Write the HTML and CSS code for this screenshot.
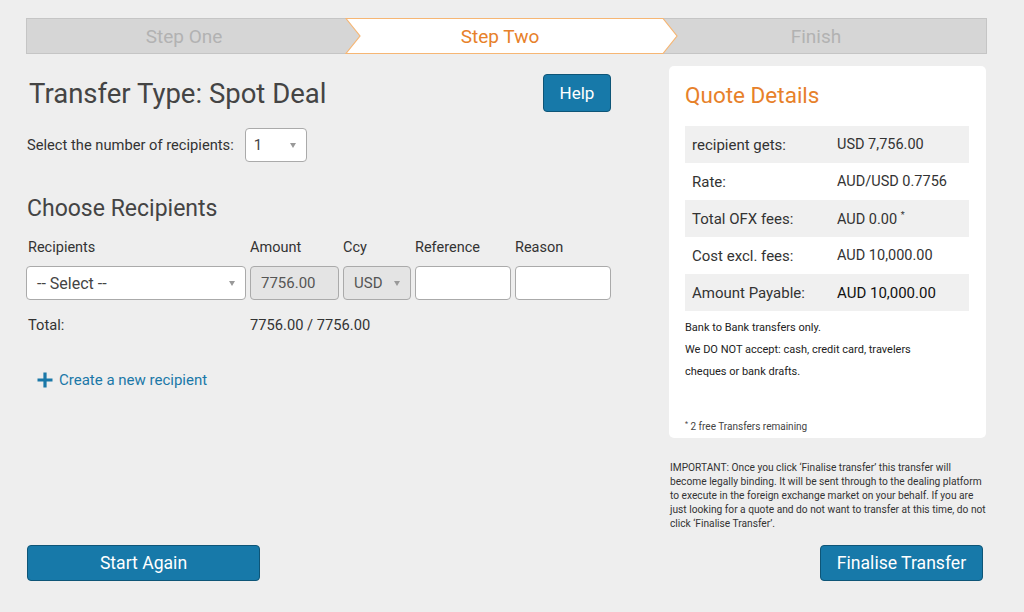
FILE: index.html
```html
<!DOCTYPE html>
<html>
<head>
<meta charset="utf-8">
<link rel="stylesheet" href="styles.css">
</head>
<body>
<div class="page">
  <div class="steps">
    <svg class="steps-bg" width="961" height="36" viewBox="0 0 961 36">
      <rect x="0.5" y="0.5" width="960" height="35" fill="#d6d6d6" stroke="#c5c5c5"/>
      <polygon points="320,0.5 334,18 320,35.5 637,35.5 651,18 637,0.5" fill="#ffffff" stroke="#f6b674" stroke-width="1.2"/>
    </svg>
    <div class="step-labels">
      <div class="step">Step One</div>
      <div class="step active">Step Two</div>
      <div class="step">Finish</div>
    </div>
  </div>

  <div class="main">
    <div class="left">
      <div class="title-row">
        <h1 class="title">Transfer Type: Spot Deal</h1>
        <button class="btn btn-help">Help</button>
      </div>
      <div class="count-row">
        <span class="label">Select the number of recipients:</span>
        <div class="field select count-select"><span>1</span><i class="caret"></i></div>
      </div>
      <h2 class="subtitle">Choose Recipients</h2>
      <div class="grid grid-head">
        <span class="col-label first">Recipients</span>
        <span class="col-label">Amount</span>
        <span class="col-label">Ccy</span>
        <span class="col-label">Reference</span>
        <span class="col-label">Reason</span>
      </div>
      <div class="grid grid-row">
        <div class="field select wide"><span>-- Select --</span><i class="caret"></i></div>
        <div class="field disabled"><span>7756.00</span></div>
        <div class="field select disabled"><span>USD</span><i class="caret"></i></div>
        <div class="field"></div>
        <div class="field"></div>
      </div>
      <div class="grid grid-total">
        <span class="first">Total:</span>
        <span class="total-val">7756.00 / 7756.00</span>
      </div>
      <a class="create" href="#">
        <svg width="16" height="16" viewBox="0 0 16 16"><path d="M8 0.5V15.5M0.5 8H15.5" stroke="#1a78a8" stroke-width="3.2"/></svg>
        <span>Create a new recipient</span>
      </a>
    </div>

    <div class="right">
      <div class="card">
        <h2 class="card-title">Quote Details</h2>
        <div class="quote">
          <div class="qrow"><span class="qk">recipient gets:</span><span class="qv">USD 7,756.00</span></div>
          <div class="qrow"><span class="qk">Rate:</span><span class="qv">AUD/USD 0.7756</span></div>
          <div class="qrow"><span class="qk">Total OFX fees:</span><span class="qv">AUD 0.00 <sup>*</sup></span></div>
          <div class="qrow"><span class="qk">Cost excl. fees:</span><span class="qv">AUD 10,000.00</span></div>
          <div class="qrow big"><span class="qk">Amount Payable:</span><span class="qv">AUD 10,000.00</span></div>
        </div>
        <p class="notes">Bank to Bank transfers only.<br>We DO NOT accept: cash, credit card, travelers cheques or bank drafts.</p>
        <p class="foot"><sup>*</sup> 2 free Transfers remaining</p>
      </div>
      <p class="important">IMPORTANT: Once you click ‘Finalise transfer’ this transfer will become legally binding. It will be sent through to the dealing platform to execute in the foreign exchange market on your behalf. If you are just looking for a quote and do not want to transfer at this time, do not click ‘Finalise Transfer’.</p>
    </div>

    <button class="btn btn-start">Start Again</button>
    <button class="btn btn-final">Finalise Transfer</button>
  </div>
</div>
</body>
</html>
```

FILE: styles.css
```css
* { box-sizing: border-box; }
body {
  margin: 0;
  background: #eeeeee;
  font-family: Roboto, "Liberation Sans", sans-serif;
  color: #333;
}
.page {
  width: 961px;
  margin-left: 26px;
  padding-top: 18px;
}
.steps {
  position: relative;
  height: 36px;
}
.steps-bg {
  position: absolute;
  left: 0;
  top: 0;
}
.step-labels {
  position: relative;
  display: grid;
  grid-template-columns: repeat(3, 316px);
  height: 36px;
  align-items: center;
  text-align: center;
}
.step {
  font-size: 19px;
  color: #b2b2b2;
}
.step.active { color: #e7812a; }

.main {
  display: grid;
  grid-template-columns: 585px 317px;
  column-gap: 58px;
  margin-top: 12px;
}
.left { padding-top: 8px; }
.title-row {
  display: flex;
  justify-content: space-between;
  align-items: center;
  height: 38px;
}
.title {
  margin: 0 0 0 3px;
  font-size: 27.5px;
  font-weight: 400;
  color: #444;
}
.btn {
  font-family: inherit;
  background: #1779a9;
  color: #fff;
  border: 1px solid #0e5577;
  border-radius: 4px;
  font-size: 17.6px;
  cursor: pointer;
}
.btn-help { width: 68px; height: 38px; font-size: 17px; }
.count-row {
  display: flex;
  align-items: center;
  gap: 11px;
  margin-top: 16px;
  font-size: 14.7px;
}
.label { margin-left: 1px; }
.field {
  height: 34px;
  background: #fff;
  border: 1px solid #aaa;
  border-radius: 4px;
  display: flex;
  align-items: center;
  justify-content: space-between;
  padding: 0 10px;
  font-size: 15px;
  color: #444;
}
.field.wide { font-size: 16px; }
.count-select { width: 62px; padding-left: 8px; }
.field.disabled { background: #e4e4e4; color: #555; }
.caret {
  width: 0;
  height: 0;
  border-left: 3.5px solid transparent;
  border-right: 3.5px solid transparent;
  border-top: 5px solid #999;
}
.subtitle {
  margin: 32px 0 0 1px;
  font-size: 23px;
  font-weight: 400;
  color: #444;
  line-height: 30px;
}
.grid {
  display: grid;
  grid-template-columns: 220px 89px 68px 96px 96px;
  column-gap: 4px;
}
.grid-head {
  margin-top: 15px;
  font-size: 14.5px;
  line-height: 18px;
}
.first { padding-left: 2px; }
.grid-row { margin-top: 9px; }
.grid-total {
  margin-top: 16px;
  font-size: 14.7px;
  line-height: 18px;
}
.total-val { grid-column: 2 / span 3; }
.create {
  display: flex;
  align-items: center;
  gap: 6px;
  margin: 36px 0 0 11px;
  color: #1a78a8;
  text-decoration: none;
  font-size: 15px;
  line-height: 20px;
}

.card {
  background: #fff;
  border-radius: 5px;
  padding: 14px 17px 4px 16px;
}
.card-title {
  margin: 0;
  font-size: 22.5px;
  line-height: 30px;
  font-weight: 400;
  color: #e7812a;
}
.quote { margin-top: 16px; }
.qrow {
  display: flex;
  align-items: center;
  height: 37px;
  font-size: 15px;
  color: #333;
}
.qrow:nth-child(odd) { background: #f0f0f0; }
.qk { width: 152px; padding-left: 7px; flex-shrink: 0; }
.qv { font-size: 14.5px; }
.qv sup { font-size: 9px; vertical-align: 6px; }
.qrow.big { font-size: 15px; }
.qrow.big .qv { color: #111; font-size: 15px; }
.notes {
  margin: 6px 0 0;
  font-size: 11px;
  line-height: 22px;
  color: #222;
  width: 240px;
}
.foot {
  margin: 34px 0 0;
  font-size: 10px;
  line-height: 14px;
  color: #444;
}
.foot sup { font-size: 7px; vertical-align: 4px; }
.important {
  margin: 23px 0 0 1px;
  font-size: 10.2px;
  line-height: 14px;
  color: #333;
}
.btn-start {
  width: 233px;
  height: 36px;
  margin-top: 14px;
  margin-left: 1px;
}
.btn-final {
  width: 163px;
  height: 36px;
  margin-top: 14px;
  justify-self: end;
  margin-right: 3px;
}
```
